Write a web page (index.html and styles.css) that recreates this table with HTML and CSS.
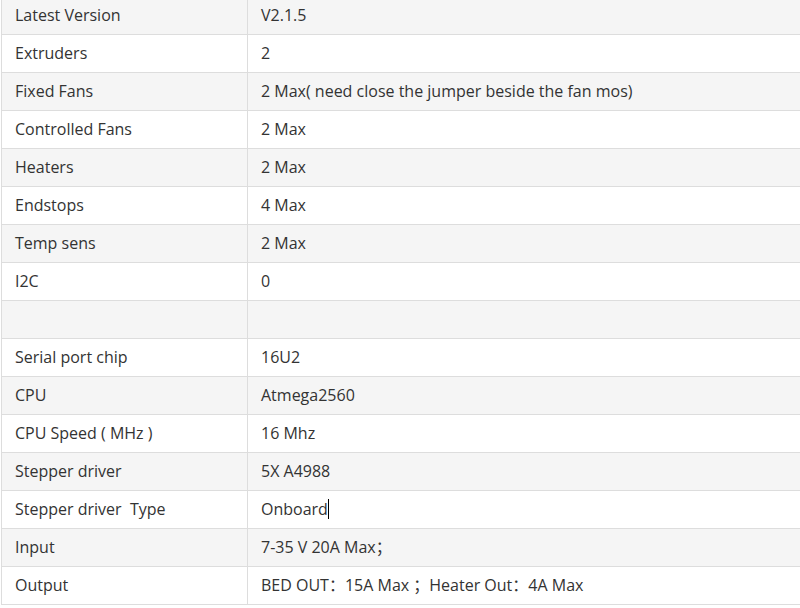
FILE: index.html
```html
<!DOCTYPE html>
<html>
<head>
<meta charset="utf-8">
<link rel="stylesheet" href="styles.css">
</head>
<body>
<div class="wrap">
<table class="spec">
<tbody>
<tr class="odd"><td class="k">Latest Version</td><td class="v">V2.1.5</td></tr>
<tr><td class="k">Extruders</td><td class="v">2</td></tr>
<tr class="odd"><td class="k">Fixed Fans</td><td class="v">2 Max( need close the jumper beside the fan mos)</td></tr>
<tr><td class="k">Controlled Fans</td><td class="v">2 Max</td></tr>
<tr class="odd"><td class="k">Heaters</td><td class="v">2 Max</td></tr>
<tr><td class="k">Endstops</td><td class="v">4 Max</td></tr>
<tr class="odd"><td class="k">Temp sens</td><td class="v">2 Max</td></tr>
<tr><td class="k">I2C</td><td class="v">0</td></tr>
<tr class="odd"><td class="k"></td><td class="v"></td></tr>
<tr><td class="k">Serial port chip</td><td class="v">16U2</td></tr>
<tr class="odd"><td class="k">CPU</td><td class="v">Atmega2560</td></tr>
<tr><td class="k">CPU Speed ( MHz )</td><td class="v">16 Mhz</td></tr>
<tr class="odd"><td class="k">Stepper driver</td><td class="v">5X A4988</td></tr>
<tr><td class="k">Stepper driver&nbsp; Type</td><td class="v">Onboard<span class="caret"></span></td></tr>
<tr class="odd"><td class="k">Input</td><td class="v">7-35 V 20A Max；</td></tr>
<tr><td class="k">Output</td><td class="v">BED OUT：15A Max ；Heater Out：4A Max</td></tr>
</tbody>
</table>
</div>
</body>
</html>
```

FILE: styles.css
```css
html, body {
  margin: 0;
  padding: 0;
  background: #ffffff;
}
body {
  font-family: "Open Sans", "Noto Sans CJK SC", sans-serif;
  font-size: 16px;
  color: #333333;
  overflow: hidden;
}
.wrap {
  margin-top: -4px;
  margin-left: 1px;
}
.spec {
  border-collapse: collapse;
  width: 830px;
  table-layout: fixed;
}
.spec td {
  border: 1px solid #dddddd;
  height: 38px;
  padding: 0 13px 2px;
  line-height: 24px;
  vertical-align: middle;
  white-space: nowrap;
  box-sizing: border-box;
}
.spec td.k {
  width: 246px;
}
.spec tr.odd td {
  background: #f5f5f5;
}
.caret {
  display: inline-block;
  width: 1px;
  height: 20px;
  background: #000;
  vertical-align: -4px;
}
```
